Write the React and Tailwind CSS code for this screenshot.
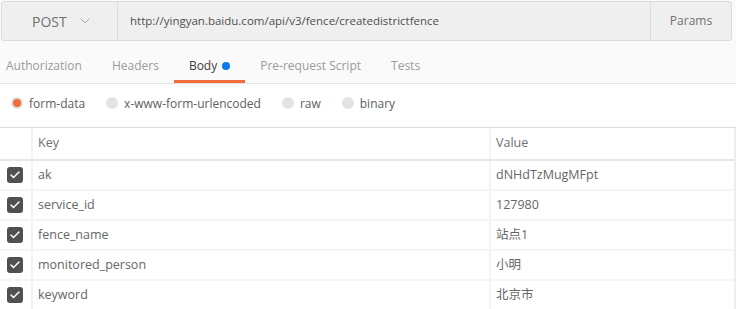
import { Check, ChevronDown } from "lucide-react";

const tabs = ["Authorization", "Headers", "Body", "Pre-request Script", "Tests"];
const modes = ["form-data", "x-www-form-urlencoded", "raw", "binary"];
const rows = [
  { key: "ak", value: "dNHdTzMugMFpt" },
  { key: "service_id", value: "127980" },
  { key: "fence_name", value: "站点1" },
  { key: "monitored_person", value: "小明" },
  { key: "keyword", value: "北京市" },
];

export default function App() {
  return (
    <div
      className="h-[309px] w-[736px] overflow-hidden bg-white text-[#505050]"
      style={{ fontFamily: '"Open Sans", "Noto Sans CJK SC", sans-serif' }}
    >
      {/* request bar */}
      <div className="bg-[#fafafa] pt-px pl-px pr-1">
        <div className="flex h-10 rounded-[3px] border border-[#dcdcdc] bg-[#efefef]">
          <div className="flex w-[116px] items-center gap-[10px] border-r border-[#dcdcdc] pl-[30px] text-[14px] text-[#707070]">
            <span>POST</span>
            <ChevronDown size={16} strokeWidth={1.5} className="text-[#a8a8a8]" />
          </div>
          <div className="flex flex-1 items-center pl-3 text-[11.5px] text-[#505050]">
            http://yingyan.baidu.com/api/v3/fence/createdistrictfence
          </div>
          <div className="flex w-[81px] items-center justify-center border-l border-[#dcdcdc] text-[12px] text-[#707070]">
            Params
          </div>
        </div>
      </div>

      {/* tabs */}
      <div className="flex h-[43px] items-end border-b border-[#e2e2e2] bg-[#fafafa] pl-[6px] text-[12px]">
        {tabs.map((t, i) => (
          <div
            key={t}
            className={
              t === "Body"
                ? "flex h-full items-center border-b-[3px] border-[#f26b3a] px-[15px] pt-[10px] text-[#404040]"
                : i === 0
                ? "flex h-full items-center border-b-[3px] border-transparent pr-[15px] pt-[10px] text-[#9a9a9a]"
                : "flex h-full items-center border-b-[3px] border-transparent px-[15px] pt-[10px] text-[#9a9a9a]"
            }
          >
            {t}
            {t === "Body" && (
              <span className="ml-[5px] h-2 w-2 rounded-full bg-[#097bed]" />
            )}
          </div>
        ))}
      </div>

      {/* body modes */}
      <div className="flex h-[44px] items-center border-b border-[#dcdcdc] pb-[6px] pl-[11px] text-[12px] text-[#606060]">
        {modes.map((m, i) => (
          <div key={m} className="mr-[21px] flex items-center gap-[6px]">
            {i === 0 ? (
              <span className="flex h-3 w-3 items-center justify-center rounded-full bg-[#e0e0e0]">
                <span className="h-2 w-2 rounded-full bg-[#f26b3a]" />
              </span>
            ) : (
              <span className="h-3 w-3 rounded-full bg-[#e3e3e3]" />
            )}
            <span className="pt-[2px]">{m}</span>
          </div>
        ))}
      </div>

      {/* params table */}
      <div className="border-r-2 border-[#eeeeee] text-[12.5px] text-[#666666]">
        <div className="flex h-[33px] border-b-2 border-[#e6e6e6]">
          <div className="w-[33px] border-r-2 border-[#f3f3f3]" />
          <div className="flex w-[458px] items-center border-r-2 border-[#f3f3f3] pl-[5px] text-[#707070]">
            Key
          </div>
          <div className="flex flex-1 items-center pl-[5px] text-[#707070]">Value</div>
        </div>
        {rows.map((r) => (
          <div key={r.key} className="flex h-[30px] border-b-2 border-[#f5f5f5]">
            <div className="flex w-[33px] items-center justify-center border-r-2 border-[#f3f3f3] pr-px">
              <span className="flex h-[16px] w-[16px] items-center justify-center rounded-[3px] bg-[#505050]">
                <Check size={12} strokeWidth={3} className="text-white" />
              </span>
            </div>
            <div className="flex w-[458px] items-center border-r-2 border-[#f3f3f3] pl-[5px]">
              {r.key}
            </div>
            <div className="flex flex-1 items-center pl-[5px]">{r.value}</div>
          </div>
        ))}
      </div>
    </div>
  );
}
